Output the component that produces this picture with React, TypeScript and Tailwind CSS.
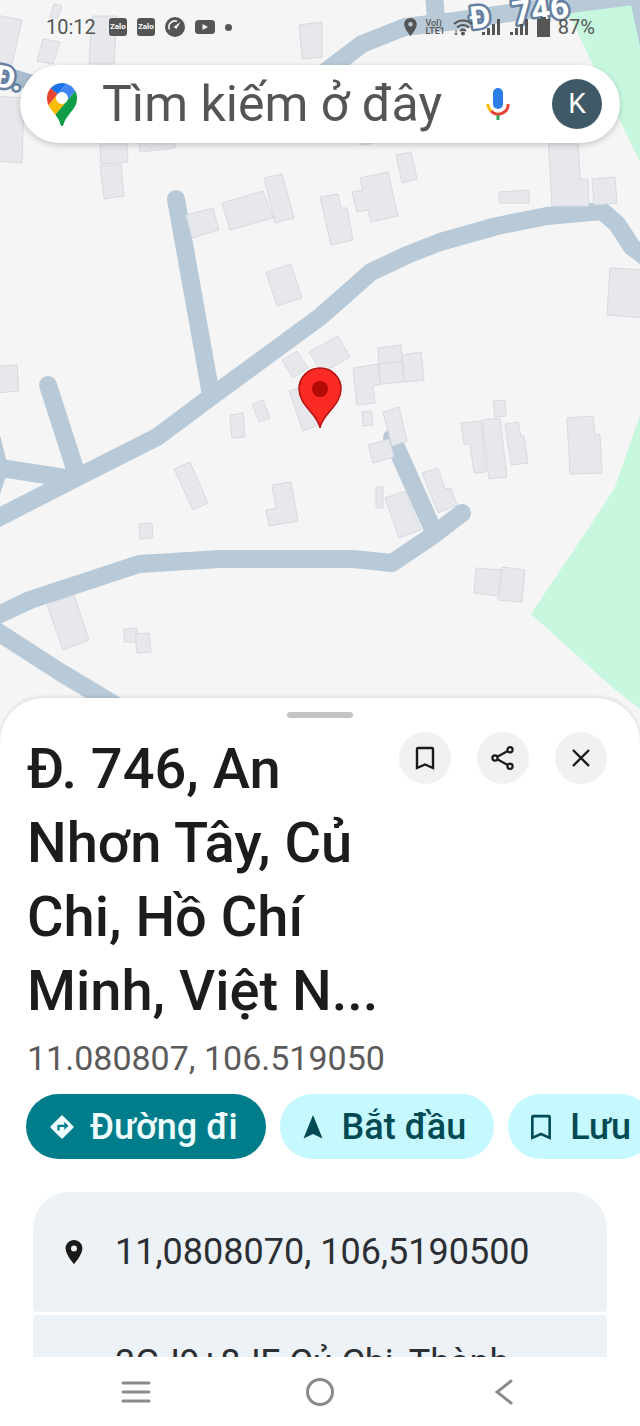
import type { ReactNode } from "react";

const roads: string[] = [
  "M-6 520 L76 478 L157 437 L208 399 L320 317 L371 272 L407 255 L440 242 L497 226 L547 216 L602 211 L617 224 L632 247 L650 260",
  "M176 199 L211 395",
  "M48 385 L76 472",
  "M-6 467 L72 479",
  "M-8 440 L-1 468 L-8 490",
  "M-6 617 L30 600 L139 564 L220 559 L353 559 L392 563 L432 536 L462 513",
  "M392 438 L434 532",
  "M-8 628 L60 672 L120 708",
  "M320 76 L362 44 L405 27 L455 21 L570 4 L650 -6",
  "M434 -6 L436 20",
  "M635 -20 L652 60",
];

const buildings: string[] = [
  "M-4 15 L22 20 L12 64 L-4 61Z",
  "M54 4 L62 6 L58 18 L50 17Z",
  "M43 39 L60 42 L53 64 L37 61Z",
  "M92 16 L117 16 L114 64 L89 64Z",
  "M299 25 L322 22 L322 57 L302 59Z",
  "M-4 96 L24 98 L22 163 L-4 161Z",
  "M99 130 L126 130 L128 162 L101 164Z",
  "M138 136 L175 136 L175 148 L140 152Z",
  "M100 166 L121 164 L124 196 L104 199Z",
  "M186 215 L213 208 L219 230 L192 238Z",
  "M222 203 L263 191 L273 218 L230 230Z",
  "M264 178 L282 174 L294 218 L275 223Z",
  "M266 272 L291 264 L302 298 L277 306Z",
  "M320 197 L338 194 L341 208 L347 208 L353 240 L331 245Z",
  "M360 178 L388 172 L398 216 L371 222 L368 210 L357 212 L352 192 L363 190Z",
  "M396 155 L411 152 L417 179 L402 183Z",
  "M359 136 L373 136 L371 144 L360 145Z",
  "M499 192 L529 190 L529 203 L499 203Z",
  "M548 136 L578 136 L580 179 L588 179 L589 206 L552 206Z",
  "M592 179 L615 177 L617 203 L594 205Z",
  "M610 268 L645 270 L645 318 L607 315Z",
  "M-4 366 L17 365 L19 391 L-4 393Z",
  "M282 360 L297 351 L308 368 L293 378Z",
  "M309 352 L338 336 L350 357 L322 373Z",
  "M289 391 L304 386 L318 425 L303 431Z",
  "M353 368 L378 364 L382 384 L373 386 L375 403 L357 405Z",
  "M378 348 L401 345 L402 361 L404 382 L380 384Z",
  "M378 364 L402 361",
  "M402 355 L421 352 L424 380 L404 382Z",
  "M230 415 L243 413 L245 437 L232 438Z",
  "M252 404 L263 400 L270 418 L259 422Z",
  "M362 412 L371 411 L373 425 L363 426Z",
  "M383 412 L399 407 L407 441 L392 446Z",
  "M368 445 L389 439 L394 457 L373 463Z",
  "M422 473 L438 468 L445 489 L451 488 L457 505 L438 513Z",
  "M376 487 L383 487 L383 508 L376 508Z",
  "M385 498 L405 491 L421 530 L399 538Z",
  "M461 423 L481 421 L486 472 L474 473 L470 444 L464 444Z",
  "M482 420 L500 418 L507 477 L489 479Z",
  "M493 401 L505 400 L506 416 L495 417Z",
  "M505 424 L518 422 L521 436 L524 436 L528 463 L511 465Z",
  "M567 418 L593 416 L595 434 L600 435 L602 473 L570 474Z",
  "M174 469 L190 462 L208 503 L193 510Z",
  "M272 485 L291 482 L298 521 L269 526 L266 510 L276 508Z",
  "M139 524 L152 523 L153 538 L140 539Z",
  "M47 605 L74 595 L89 640 L63 650Z",
  "M124 629 L137 628 L137 642 L124 642Z",
  "M135 634 L149 633 L151 652 L137 653Z",
  "M476 568 L502 570 L499 596 L474 593Z",
  "M502 567 L525 570 L522 602 L498 600Z",
];

function MapCanvas() {
  return (
    <svg
      className="absolute inset-0 h-full w-full"
      viewBox="0 0 640 744"
      preserveAspectRatio="xMidYMin slice"
      aria-hidden="true"
    >
      <rect width="640" height="744" fill="#f5f5f5" />
      <path d="M566 8 L640 0 V162 L592 63Z" fill="#c7f8df" />
      <path d="M640 415 L615 487 L592 523 L531 614 L613 688 L640 709Z" fill="#c7f8df" />
      <path d="M-4 72 L42 86" stroke="#a9bccd" strokeWidth="16" />
      <g fill="none" stroke="#b8cad8" strokeWidth="18" strokeLinecap="round" strokeLinejoin="round">
        {roads.map((d) => (
          <path key={d} d={d} />
        ))}
      </g>
      <g fill="#e7e8ec" stroke="#d8d9e2" strokeWidth="1">
        {buildings.map((d) => (
          <path key={d} d={d} />
        ))}
      </g>
      <g
        className="font-[Roboto,sans-serif]"
        fill="#fff"
        stroke="#6580a0"
        strokeWidth="5"
        strokeLinejoin="round"
        paintOrder="stroke"
        fontWeight="700"
      >
        <text transform="translate(471 29) rotate(-7)" fontSize="31">Đ</text>
        <text transform="translate(514 25) rotate(-8)" fontSize="33">746</text>
        <text transform="translate(-7 86) rotate(10)" fontSize="31">Đ.</text>
      </g>
      <path
        d="M320 428 C318 414 299 406 299 389 A21 21 0 0 1 341 389 C341 406 322 414 320 428Z"
        fill="#fb2a25"
        stroke="#b3120f"
        strokeWidth="1.5"
      />
      <circle cx="320" cy="389" r="8" fill="#b40b08" />
    </svg>
  );
}

function ZaloIcon() {
  return (
    <span className="flex h-[18px] w-[18px] items-center justify-center rounded-[3px] bg-[#555] text-[8px] font-bold text-white">
      Zalo
    </span>
  );
}

function PinIcon({ className }: { className: string }) {
  return (
    <svg className={className} viewBox="5 2 14 20" fill="currentColor" aria-hidden="true">
      <path d="M12 2C8.1 2 5 5.1 5 9c0 5.200 7 13 7 13s7-7.800 7-13c0-3.900-3.100-7-7-7zm0 9.500a2.500 2.500 0 1 1 0-5 2.500 2.500 0 0 1 0 5z" />
    </svg>
  );
}

function SignalIcon() {
  return (
    <svg className="h-[18px] w-5" viewBox="0 0 20 18" fill="currentColor" aria-hidden="true">
      <path d="M1 14h3v3H1zM6 10h3v7H6zM11 6h3v11h-3zM16 1h3v16h-3z" />
    </svg>
  );
}

function StatusBar() {
  return (
    <div className="flex h-[54px] items-center justify-between pl-[46px] pr-[45px] text-xl text-[#555]">
      <div className="flex items-center gap-[10px]">
        <span className="mr-[3px]">10:12</span>
        <ZaloIcon />
        <ZaloIcon />
        <svg className="h-5 w-5" viewBox="0 0 20 20" aria-hidden="true">
          <circle cx="10" cy="10" r="10" fill="currentColor" />
          <path d="M4.500 12.500A6 6 0 0 1 12 4.300" fill="none" stroke="#f5f5f5" strokeWidth="1.600" />
          <path d="M15.500 5 L11.500 12 L8.500 10Z" fill="#f5f5f5" />
        </svg>
        <svg className="h-[14px] w-5" viewBox="0 0 20 14" aria-hidden="true">
          <rect width="20" height="14" rx="3.500" fill="currentColor" />
          <path d="M7.500 4v6l5.500-3z" fill="#f5f5f5" />
        </svg>
        <span className="h-[7px] w-[7px] rounded-full bg-[#555]" />
      </div>
      <div className="flex items-center gap-2">
        <PinIcon className="h-[18px] w-[13px]" />
        <span className="text-[9px] font-medium leading-[8px]">
          VoI)
          <br />
          LTE1
        </span>
        <svg
          className="h-[18px] w-5"
          viewBox="0 0 20 18"
          fill="none"
          stroke="currentColor"
          strokeWidth="2"
          aria-hidden="true"
        >
          <path d="M1 6a13 13 0 0 1 18 0M4 9.500a8.500 8.500 0 0 1 12 0M7 13a4.500 4.500 0 0 1 6 0" />
          <circle cx="10" cy="15.500" r="1" fill="currentColor" />
          <path d="M3 12v5M1.500 15.500L3 17l1.500-1.500" strokeWidth="1" />
        </svg>
        <SignalIcon />
        <SignalIcon />
        <svg className="h-5 w-[13px]" viewBox="0 0 13 20" fill="currentColor" aria-hidden="true">
          <path d="M4 0h5v2h4v18H0V2h4z" />
        </svg>
        <span>87%</span>
      </div>
    </div>
  );
}

function MapsLogo() {
  return (
    <svg className="h-[43px] w-[30px] shrink-0" viewBox="0 0 92.300 132.300" aria-hidden="true">
      <path fill="#1a73e8" d="M60.200 2.200C55.800.8 51 0 46.100 0 32 0 19.300 6.400 10.800 16.500l21.800 18.300L60.200 2.200z" />
      <path fill="#ea4335" d="M10.800 16.500C4.100 24.500 0 34.900 0 46.100c0 8.700 1.700 15.700 4.600 22l28-33.300-21.800-18.300z" />
      <path fill="#4285f4" d="M46.200 28.500c9.800 0 17.700 7.900 17.700 17.700 0 4.300-1.600 8.300-4.200 11.400 0 0 13.900-16.600 27.500-32.700-5.600-10.800-15.300-19-27-22.700L32.600 34.800c3.300-3.800 8.100-6.300 13.600-6.300" />
      <path fill="#fbbc04" d="M46.200 63.800c-9.800 0-17.700-7.900-17.700-17.700 0-4.300 1.500-8.300 4.100-11.300l-28 33.300c4.800 10.600 12.800 19.200 21 29.900l34.100-40.500c-3.300 3.900-8.100 6.300-13.500 6.300" />
      <path fill="#0f9d48" d="M59.100 109.200c15.400-24.100 33.300-35 33.300-63 0-7.700-1.900-14.900-5.200-21.300L25.600 98c2.600 3.400 5.300 7.300 7.900 11.300 9.400 14.500 6.800 23.100 12.800 23.100s3.400-8.700 12.800-23.200" />
      <circle cx="46.200" cy="46.200" r="17.700" fill="#fff" />
    </svg>
  );
}

function MicIcon() {
  return (
    <svg className="h-[34px] w-6" viewBox="0 0 24 34" fill="none" aria-hidden="true">
      <rect x="7" y="1" width="10" height="21" rx="5" fill="#2b7de9" />
      <path d="M1.800 17A10 10 0 0 0 5 24" stroke="#fbbc04" strokeWidth="3" />
      <path d="M5 24a10 10 0 0 0 17.200-7" stroke="#ea4335" strokeWidth="3" />
      <path d="M12 28v5" stroke="#34a853" strokeWidth="3" />
    </svg>
  );
}

function SearchBar() {
  return (
    <form className="mx-5 mt-[11px] flex h-[78px] items-center rounded-full bg-white pl-[27px] pr-[18px] shadow-[0_2px_6px_rgba(0,0,0,0.2)]">
      <MapsLogo />
      <input
        type="text"
        aria-label="Tìm kiếm ở đây"
        placeholder="Tìm kiếm ở đây"
        className="ml-[25px] h-full min-w-0 flex-1 bg-transparent text-[50px] text-[#555] outline-none placeholder:text-[#555]"
      />
      <button type="button" aria-label="Mic" className="mr-[42px]">
        <MicIcon />
      </button>
      <button
        type="button"
        className="flex h-[50px] w-[50px] items-center justify-center rounded-full bg-[#3f5a66] text-[28px] text-white"
      >
        K
      </button>
    </form>
  );
}

function BookmarkIcon({ className }: { className: string }) {
  return (
    <svg className={className} viewBox="0 0 20 24" fill="none" stroke="currentColor" strokeWidth="2.400" aria-hidden="true">
      <path d="M2 22V3Q2 2 3 2H17Q18 2 18 3V22L10 18.500Z" />
    </svg>
  );
}

function RoundButton({ label, children }: { label: string; children: ReactNode }) {
  return (
    <button
      type="button"
      aria-label={label}
      className="flex h-[52px] w-[52px] items-center justify-center rounded-full bg-[#f1f1f1] text-[#1a1a1a]"
    >
      {children}
    </button>
  );
}

function PlaceHeader() {
  return (
    <div className="flex items-start justify-between pl-[27px] pr-[33px]">
      <h1 className="w-[360px] text-[56px] font-medium leading-[74px] text-[#1c1c1c]">
        Đ. 746, An Nhơn Tây, Củ Chi, Hồ Chí Minh, Việt N...
      </h1>
      <div className="flex gap-[26px]">
        <RoundButton label="Lưu">
          <BookmarkIcon className="h-6 w-5" />
        </RoundButton>
        <RoundButton label="Chia sẻ">
          <svg className="h-6 w-6" viewBox="0 0 24 24" fill="none" stroke="currentColor" strokeWidth="2.200" aria-hidden="true">
            <circle cx="4" cy="12" r="2.600" />
            <circle cx="19" cy="3.800" r="2.600" />
            <circle cx="19" cy="20.200" r="2.600" />
            <path d="M6.300 10.700L16.700 5M6.300 13.300L16.700 19" />
          </svg>
        </RoundButton>
        <RoundButton label="Đóng">
          <svg className="h-[18px] w-[18px]" viewBox="0 0 18 18" stroke="currentColor" strokeWidth="2.400" aria-hidden="true">
            <path d="M1 1L17 17M17 1L1 17" />
          </svg>
        </RoundButton>
      </div>
    </div>
  );
}

const chip = "flex h-[65px] shrink-0 items-center rounded-full px-[22px] text-[36px]";

function Actions() {
  return (
    <div className="mt-[6px] flex gap-[14px] overflow-hidden pl-[26px]">
      <button type="button" className={`${chip} gap-[14px] bg-[#007d8a] pr-7 font-medium text-[#effdff]`}>
        <svg className="h-7 w-7" viewBox="0 0 24 24" fill="currentColor" aria-hidden="true">
          <path d="M21.700 11.300l-9-9a1 1 0 0 0-1.400 0l-9 9a1 1 0 0 0 0 1.400l9 9a1 1 0 0 0 1.400 0l9-9a1 1 0 0 0 0-1.400zM14 14.500V12h-4v3H8v-4c0-.6.400-1 1-1h5V7.500l3.500 3.500-3.500 3.500z" />
        </svg>
        Đường đi
      </button>
      <button type="button" className={`${chip} gap-[18px] bg-[#c6f8ff] pr-7 font-medium text-[#004a53]`}>
        <svg className="h-6 w-[22px]" viewBox="0 0 22 24" fill="currentColor" aria-hidden="true">
          <path d="M11 0L20.500 23.500 11 19 1.500 23.500Z" />
        </svg>
        Bắt đầu
      </button>
      <button type="button" className={`${chip} gap-[18px] bg-[#c6f8ff] font-medium text-[#004a53]`}>
        <BookmarkIcon className="h-[26px] w-[22px]" />
        Lưu
      </button>
    </div>
  );
}

function Details() {
  return (
    <ul className="mx-[33px] mt-[33px] flex h-[165px] flex-col gap-[3px] overflow-hidden text-[36px] leading-[48px] text-[#2b2f33]">
      <li className="flex h-[120px] shrink-0 items-center gap-8 rounded-b rounded-t-[36px] bg-[#edf2f6] pl-8">
        <PinIcon className="h-6 w-[18px] text-[#1a1a1a]" />
        11,0808070, 106,5190500
      </li>
      <li className="shrink-0 rounded bg-[#edf2f6] pb-6 pl-[82px] pt-6">3GJ9+8JF Củ Chi, Thành</li>
    </ul>
  );
}

function NavBar() {
  return (
    <nav className="relative flex h-[69px] shrink-0 items-center bg-white px-11 text-[#8a8a8a]">
      <button type="button" aria-label="Recent apps" className="flex flex-1 justify-center">
        <svg className="h-[22px] w-[30px]" viewBox="0 0 30 22" stroke="currentColor" strokeWidth="3" strokeLinecap="round" aria-hidden="true">
          <path d="M2 2H28M2 11H28M2 20H28" />
        </svg>
      </button>
      <button type="button" aria-label="Home" className="flex flex-1 justify-center">
        <span className="h-7 w-7 rounded-full border-[3px] border-[#8a8a8a]" />
      </button>
      <button type="button" aria-label="Back" className="flex flex-1 justify-center">
        <svg className="h-[26px] w-[18px]" viewBox="0 0 18 26" fill="none" stroke="currentColor" strokeWidth="3" strokeLinecap="round" aria-hidden="true">
          <path d="M16 2L2 13L16 24" />
        </svg>
      </button>
    </nav>
  );
}

export default function App() {
  return (
    <div className="flex min-h-screen flex-col overflow-hidden bg-white font-[Roboto,'Liberation_Sans',sans-serif]">
      <section className="relative min-h-[400px] flex-1">
        <MapCanvas />
        <div className="relative">
          <StatusBar />
          <SearchBar />
        </div>
      </section>
      <main className="relative -mt-11 rounded-t-[44px] bg-white shadow-[0_-1px_4px_rgba(0,0,0,0.12)]">
        <div className="flex h-[34px] justify-center pt-[14px]">
          <span className="h-[6px] w-[66px] rounded-full bg-[#c4c4c4]" />
        </div>
        <PlaceHeader />
        <p className="pl-[27px] text-[34px] leading-[60px] text-[#5b5b5b]">11.080807, 106.519050</p>
        <Actions />
        <Details />
      </main>
      <NavBar />
    </div>
  );
}
